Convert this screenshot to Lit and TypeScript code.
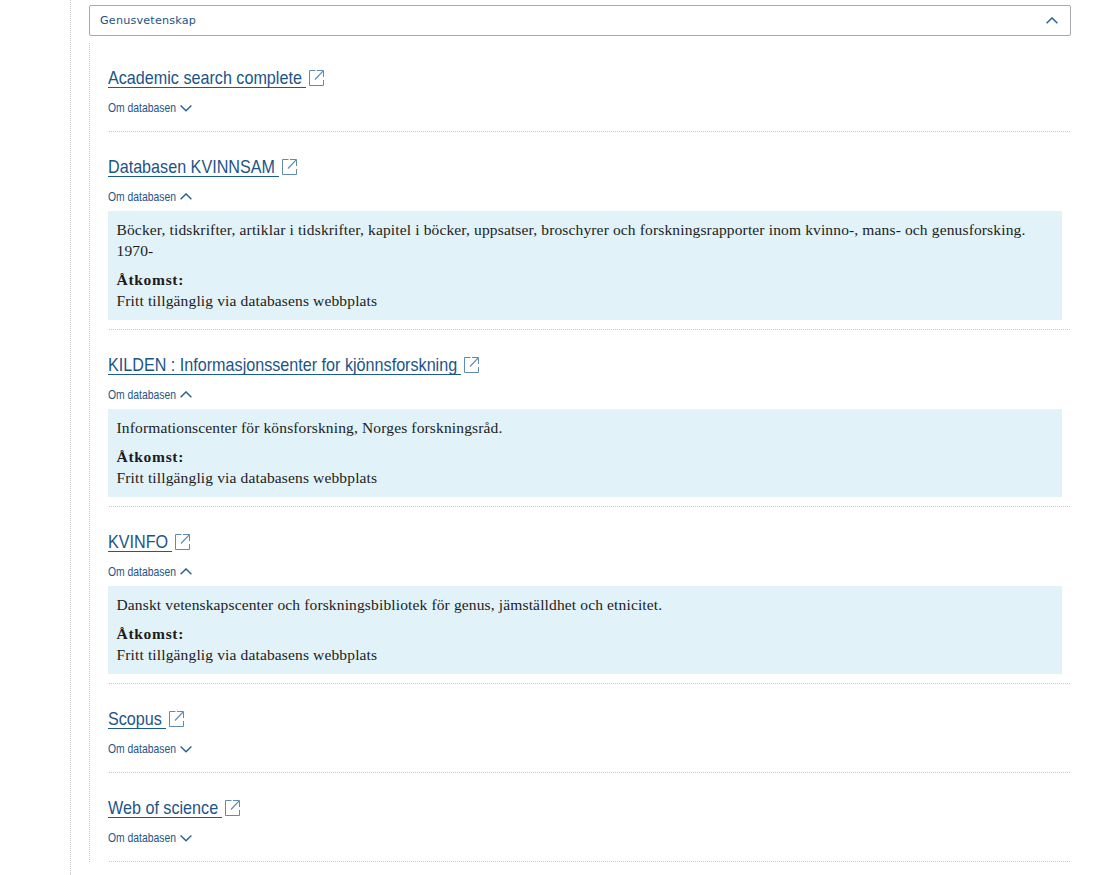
import { LitElement, html, css, svg, nothing } from "lit";
import { customElement, property } from "lit/decorators.js";

interface Database {
  name: string;
  width: number;
  about?: string[];
}

const databases: Database[] = [
  { name: "Academic search complete", width: 198 },
  {
    name: "Databasen KVINNSAM",
    width: 171,
    about: [
      "Böcker, tidskrifter, artiklar i tidskrifter, kapitel i böcker, uppsatser, broschyrer och forskningsrapporter inom kvinno-, mans- och genusforsking.",
      "1970-",
    ],
  },
  {
    name: "KILDEN : Informasjonssenter for kjönnsforskning",
    width: 353,
    about: ["Informationscenter för könsforskning, Norges forskningsråd."],
  },
  {
    name: "KVINFO",
    width: 64,
    about: ["Danskt vetenskapscenter och forskningsbibliotek för genus, jämställdhet och etnicitet."],
  },
  { name: "Scopus", width: 58 },
  { name: "Web of science", width: 114 },
];

const chevron = (up: boolean) => html`<svg class="chevron" width="12" height="8" viewBox="0 0 12 8">
  ${up
    ? svg`<path d="M.6 6.2 6 .9l5.4 5.3" fill="none" stroke="#2a5f92" stroke-width="1.4"/>`
    : svg`<path d="M.6 1.5 6 6.8l5.4-5.3" fill="none" stroke="#2a5f92" stroke-width="1.4"/>`}
</svg>`;

@customElement("database-item")
export class DatabaseItem extends LitElement {
  @property({ attribute: false }) item!: Database;

  static styles = css`
    :host {
      display: block;
      box-sizing: border-box;
      padding: 23px 0 0;
    }
    .title {
      display: flex;
      height: 24px;
    }
    .link {
      height: 21px;
      border-bottom: 1px solid #1d5a8f;
      color: #1d5486;
      text-decoration: none;
      white-space: pre;
      font: 19px/24px "Liberation Sans", Arial, sans-serif;
    }
    .narrow {
      display: inline-block;
      transform: scaleX(0.85);
      transform-origin: 0 50%;
    }
    .external {
      flex: none;
      margin: 4px 0 0 3px;
    }
    .toggle {
      display: flex;
      height: 16px;
      margin-top: 11px;
      color: #1d5486;
      white-space: nowrap;
      font: 12.2px/15px "Liberation Sans", Arial, sans-serif;
    }
    .label {
      width: 72px;
    }
    .chevron {
      flex: none;
      margin-top: 3px;
    }
    .box {
      box-sizing: border-box;
      margin: 5px 9px 0 0;
      padding: 8px 8px 9px 8.5px;
      background: #e1f2f8;
      color: #1c1c1c;
      white-space: nowrap;
      letter-spacing: 0.14px;
      font: 15.5px/21px "Liberation Serif", Georgia, serif;
    }
    .access {
      margin-top: 8px;
    }
    .rule {
      margin: 9px 1px 0;
      border-top: 1px dotted #c8c8c8;
    }
    .closed {
      margin-top: 14px;
    }
    .strong {
      font-weight: bold;
      letter-spacing: 0.7px;
    }
  `;

  render() {
    const { name, width, about } = this.item;
    return html`
      <div class="title">
        <a class="link" style="width:${width}px"><span class="narrow">${name} </span></a>
        <svg class="external" width="15" height="16" viewBox="0 0 15 16" fill="none" stroke="#5f8bb0">
          <path d="M6.5 .5H.5v15h14V10M8 .5h6.5V7" />
          <path d="M6 9.5 14.2 .8" stroke-width="1.2" />
        </svg>
      </div>
      <div class="toggle">
        <div class="label"><span class="narrow">Om databasen</span></div>
        ${chevron(!!about)}
      </div>
      ${about
        ? html`<div class="box">
            ${about.map((line) => html`<div><span class="line">${line}</span></div>`)}
            <div class="access"><span class="strong">Åtkomst:</span></div>
            <div><span class="line">Fritt tillgänglig via databasens webbplats</span></div>
          </div>`
        : nothing}
      <div class="rule ${about ? "" : "closed"}"></div>
    `;
  }
}

@customElement("app-root")
export class AppRoot extends LitElement {
  static styles = css`
    :host {
      display: block;
      box-sizing: border-box;
      height: 875px;
      overflow: hidden;
      padding-left: 70px;
      background: #fff;
    }
    .column {
      box-sizing: border-box;
      height: 875px;
      padding: 5px 38px 0 18px;
      border-left: 1px dotted #c8c8c8;
    }
    .header {
      box-sizing: border-box;
      display: flex;
      align-items: center;
      justify-content: space-between;
      height: 31px;
      padding: 1px 12px 0 10px;
      border: 1px solid #a9a9a9;
      border-radius: 2px;
      color: #1d5486;
      letter-spacing: 0.18px;
      font: 11.2px/20px "DejaVu Sans", Verdana, sans-serif;
    }
    .header .chevron {
      margin-bottom: 1px;
    }
    .list {
      margin-top: 7px;
      padding-left: 18px;
      border-left: 1px dotted #c8c8c8;
    }
  `;

  render() {
    return html`
      <div class="column">
        <div class="header"><span>Genusvetenskap</span>${chevron(true)}</div>
        <div class="list">
          ${databases.map((item) => html`<database-item .item=${item}></database-item>`)}
        </div>
      </div>
    `;
  }
}
